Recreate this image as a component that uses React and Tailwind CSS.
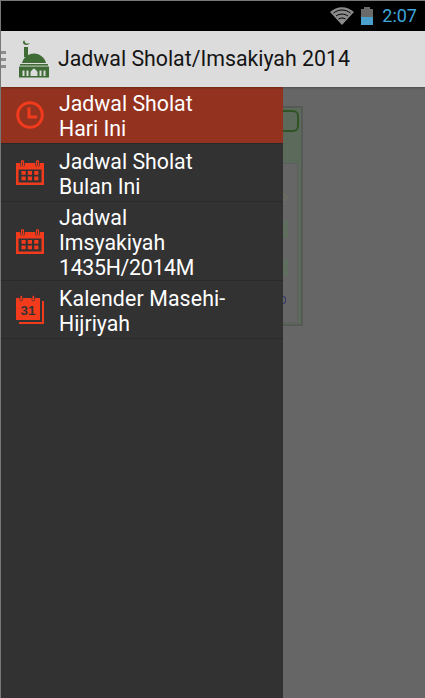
import React from "react";

const Cal = () => (
  <svg width="28" height="25" viewBox="0 0 28 25" fill="none">
    <path fillRule="evenodd" fill="#f23a1c" d="M0 3h28v22H0zM2.500 9.500V22.500h23V9.500z" />
    <rect x="4.200" y="0" width="4.600" height="7" rx="2.300" fill="#333333" />
    <rect x="19.200" y="0" width="4.600" height="7" rx="2.300" fill="#333333" />
    <rect x="5.500" y="0.700" width="2" height="5.600" rx="1" fill="none" stroke="#f23a1c" strokeWidth="1.300" />
    <rect x="20.500" y="0.700" width="2" height="5.600" rx="1" fill="none" stroke="#f23a1c" strokeWidth="1.300" />
    {[5.500, 11.800, 18.200].map((x) => [11, 16.500].map((y) => <rect key={x + "-" + y} x={x} y={y} width="4.200" height="3.800" fill="#f23a1c" />))}
  </svg>
);

const Clock = () => (
  <svg width="28" height="28" viewBox="0 0 28 28" fill="none" stroke="#f23a1c">
    <circle cx="14" cy="14" r="12.300" strokeWidth="3" />
    <path d="M13 6.500v9.500h8" strokeWidth="3" />
  </svg>
);

const Kal = () => (
  <svg width="28" height="29" viewBox="0 0 28 29" fill="none">
    <path fill="#f23a1c" d="M0 3h24v22H0z" />
    <path d="M27 6v22H3" stroke="#f23a1c" strokeWidth="2" />
    <rect x="4" y="0.500" width="2.600" height="5.500" rx="1.300" fill="#f23a1c" stroke="#333" strokeWidth="0.700" />
    <rect x="16" y="0.500" width="2.600" height="5.500" rx="1.300" fill="#f23a1c" stroke="#333" strokeWidth="0.700" />
    <text x="12" y="19.500" textAnchor="middle" fontSize="13.500" fontWeight="700" fill="#333" fontFamily="Liberation Sans, sans-serif">31</text>
  </svg>
);

const Mosque = () => (
  <svg width="30" height="38" viewBox="0 0 30 38">
    <path d="M5.500 0.500c.2 2.600 2 4 5.500 2.500-1.600 2.400-6 2.800-7-.3-.3-1 .5-2 1.500-2.200z" fill="#3f6b35" />
    <rect x="5" y="7" width="4" height="10" fill="#3f6b35" />
    <path d="M3 23c1-5 6-9.500 12-9.500S26 18 27 23z" fill="#3f6b35" />
    <rect x="1" y="24" width="28" height="1.600" fill="#3f6b35" />
    <path fillRule="evenodd" fill="#3f6b35" d="M0 26.500h30V37.500H0zM3.500 30.500v5.500h2v-5.500zM7.500 30.500v5.500h2v-5.500zM20.500 30.500v5.500h2v-5.500zM24.500 30.500v5.500h2v-5.500zM11.500 36h7v-4c-.5-1.500-2.500-3-3.500-3.500-1 .5-3 2-3.500 3.500z" />
  </svg>
);

const items = [
  { icon: <Clock />, lines: [["Jadwal Sholat", ""], ["Hari Ini", ""]], h: "h-[57px]", active: true },
  { icon: <Cal />, lines: [["Jadwal Sholat", ""], ["Bulan Ini", ""]], h: "h-[58px]" },
  { icon: <Cal />, lines: [["Jadwal", ""], ["Imsyakiyah", ""], ["1435H/2014M", "tracking-[-0.3px]"]], h: "h-[79px]" },
  { icon: <Kal />, lines: [["Kalender Masehi-", "tracking-[0.13px]"], ["Hijriyah", ""]], h: "h-[58px]" },
];

export default function App() {
  return (
    <div className="w-[425px] h-[698px] overflow-hidden bg-[#666666] flex flex-col border-l border-t border-[#777777] font-['Roboto',sans-serif]">
      <div className="h-[30px] shrink-0 bg-black flex items-center justify-end pr-[8px] gap-[6px]">
        <svg width="24" height="18" viewBox="0 0 24 18" className="mt-[-1px] mr-[1px]">
          <path d="M12 18 0 5C7-1.500 17-1.500 24 5z" fill="#8a8a8a" />
          <path d="M3.500 6C8.500 2 15.500 2 20.500 6M6 9c3.500-2.500 8.500-2.500 12 0M8.500 12c2-1.300 5-1.300 7 0" stroke="#000" strokeWidth="1" fill="none" />
        </svg>
        <div className="w-[12px] h-[18px] flex flex-col items-center mr-[3px]">
          <div className="w-[6px] h-[2px] bg-[#6a6a6a]" />
          <div className="w-[12px] h-[8px] bg-[#6a6a6a]" />
          <div className="w-[12px] h-[8px] bg-[#4aa0cc]" />
        </div>
        <span className="text-[18px] leading-[20px] text-[#3ea6dc]">2:07</span>
      </div>
      <div className="h-[56px] shrink-0 bg-[#dcdcdc] flex items-center relative z-10 shadow-[0_1px_2px_rgba(0,0,0,0.25)]">
        <div className="w-[6px] flex flex-col gap-[4px] mr-[13px] ml-[-1px]">
          <div className="h-[3px] bg-[#8c8c8c]" />
          <div className="h-[3px] bg-[#8c8c8c]" />
          <div className="h-[3px] bg-[#8c8c8c]" />
        </div>
        <Mosque />
        <span className="ml-[9px] text-[21.3px] text-[#141414] whitespace-nowrap">Jadwal Sholat/Imsakiyah 2014</span>
      </div>
      <div className="flex-1 flex min-h-0">
        <div className="w-[282px] shrink-0 bg-[#323232] flex flex-col">
          {items.map((it, i) => (
            <div
              key={i}
              className={`${it.h} shrink-0 flex items-center border-b border-[#2a2a2a] ${it.active ? "bg-[#93321f]" : ""}`}
            >
              <div className="w-[58px] shrink-0 flex justify-center">{it.icon}</div>
              <div className="text-[21.3px] leading-[25px] text-white pt-[2px]">
                {it.lines.map(([l, c]) => (
                  <div key={l} className={`whitespace-nowrap ${c}`}>{l}</div>
                ))}
              </div>
            </div>
          ))}
        </div>
        <div className="pt-[19px]">
          <div className="w-[20px] h-[220px] bg-[#5c6a5c] border-r-2 border-y-2 border-[#555a55] flex flex-col">
            <div className="h-[55px] shrink-0 pt-[2px] pr-[2px]">
              <div className="h-[22px] rounded-r-[6px] border-r-2 border-y-2 border-[#2e5426]" />
            </div>
            <div className="flex-1 mr-[3px] mb-[1px] bg-[#666666] border-r border-y border-[#5e5e5e] flex flex-col items-start">
              <svg width="5" height="8" viewBox="0 0 5 8" className="mt-[29px]">
                <path d="M0 0 4 4 0 8" fill="none" stroke="#6f6f5e" strokeWidth="1.500" />
              </svg>
              <div className="mt-[20px] w-[5px] h-[17px] bg-[#5f6e5f]" />
              <div className="mt-[21px] w-[5px] h-[17px] bg-[#5f6e5f]" />
              <div className="mt-[20px] w-[3px] h-[8px] rounded-r-[3px] border-r border-y border-[#34346e]" />
            </div>
          </div>
        </div>
      </div>
    </div>
  );
}
